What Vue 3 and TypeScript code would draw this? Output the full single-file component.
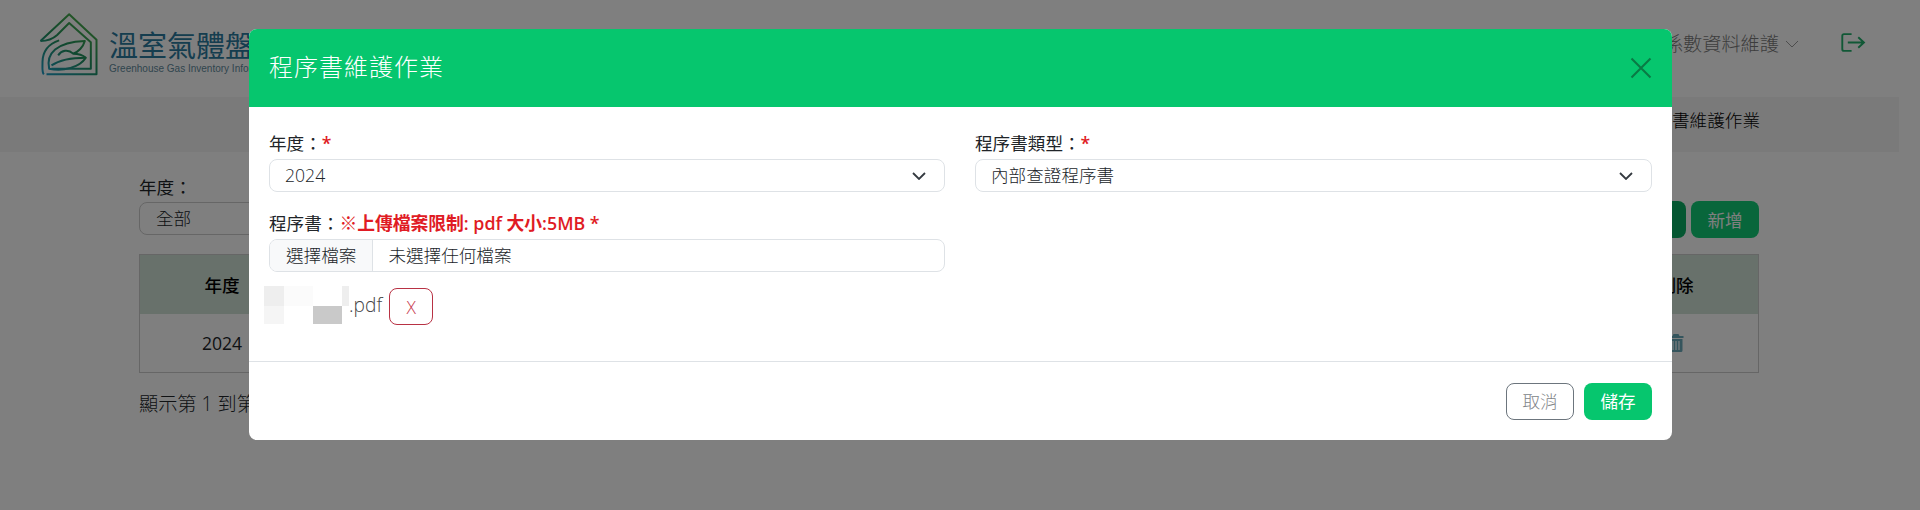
<script setup lang="ts">
const mosaic: string[] = ['#eeeeee', '#fbfbfb', '#ffffff', '#eeeeee', '#f5f5f5', '#ffffff', '#c9c9c9', '#ffffff']
</script>

<template>
  <div class="page" lang="zh-Hant">
    <header class="top">
      <div class="brand">
        <svg class="logo" viewBox="55 35 185 195" width="62" height="65" fill="none">
          <defs>
            <linearGradient id="lg" gradientUnits="userSpaceOnUse" x1="60" y1="225" x2="190" y2="40">
              <stop offset="0" stop-color="#1f9fd0" />
              <stop offset="0.5" stop-color="#209060" />
              <stop offset="1" stop-color="#50b048" />
            </linearGradient>
          </defs>
          <g stroke="url(#lg)" stroke-width="6" stroke-linejoin="round">
            <path d="M62 122 L148 42 L230 118 V222 H80" />
            <path d="M62 122 C85 122 100 115 112 104 L148 68 L213 126 V205 H95" />
            <path d="M72 222 C66 215 68 205 68 185 C68 155 85 130 118 120" />
            <path d="M88 205 C78 160 110 125 195 122 C190 140 175 155 160 160 C175 160 190 165 198 172 C180 200 130 215 88 205 Z" />
            <path d="M95 195 C120 178 160 172 198 172 M115 165 C125 150 145 145 160 160" />
          </g>
        </svg>
        <div class="brand-text">
          <div class="brand-name">溫室氣體盤查資訊系統</div>
          <div class="brand-sub">Greenhouse Gas Inventory Information System</div>
        </div>
      </div>
      <nav class="nav">
        <span class="nav-item">係數資料維護</span>
        <svg class="nav-caret" viewBox="0 0 14 8" width="14" height="8" fill="none">
          <path d="M1 1 L7 7 L13 1" stroke="#9a9a9a" stroke-width="1" />
        </svg>
        <svg class="logout" viewBox="0 0 26 20" width="25" height="19" fill="none">
          <path d="M11 1.2 H3 Q1.2 1.2 1.2 3 V17 Q1.2 18.8 3 18.8 H11" stroke="#22b06c" stroke-width="2" />
          <path d="M7 10 H24 M18 4.5 L24 10 L18 15.5" stroke="#22b06c" stroke-width="2" />
        </svg>
      </nav>
    </header>

    <div class="crumb"><span>程序書維護作業</span></div>

    <main class="content">
      <div class="filters">
        <div class="filter">
          <label class="filter-label">年度：</label>
          <div class="filter-select">全部</div>
        </div>
        <div class="actions">
          <button class="act act-dark">查詢</button>
          <button class="act">新增</button>
        </div>
      </div>

      <table class="list">
        <thead>
          <tr>
            <th class="col-year">年度</th>
            <th>程序書類型</th>
            <th class="col-del">刪除</th>
          </tr>
        </thead>
        <tbody>
          <tr>
            <td>2024</td>
            <td>內部查證程序書</td>
            <td>
              <svg class="trash" viewBox="0 0 16 18" width="16" height="18">
                <path fill="#6aaabb" d="M5.5 0 H10.5 L11.5 2 H15.5 V4 H.5 V2 H4.5 Z M1.5 5 H14.5 V16.5 Q14.5 18 13 18 H3 Q1.5 18 1.5 16.5 Z" />
                <path stroke="#ffffff" stroke-width="1.2" d="M5 7 V16 M8 7 V16 M11 7 V16" />
              </svg>
            </td>
          </tr>
        </tbody>
      </table>
      <p class="pager">顯示第 1 到第 1 項，共 1 項</p>
    </main>

    <div class="backdrop">
      <section class="modal">
        <div class="modal-head">
          <h2 class="modal-title">程序書維護作業</h2>
          <svg class="close" viewBox="0 0 22 22" width="22" height="22" fill="none">
            <path d="M1.5 1.5 L20.5 20.5 M20.5 1.5 L1.5 20.5" stroke="#0a7a45" stroke-width="2" />
          </svg>
        </div>

        <div class="modal-body">
          <div class="grid">
            <div class="field">
              <label>年度：<span class="req">*</span></label>
              <div class="select">
                <span>2024</span>
                <svg viewBox="0 0 14 8" width="14" height="8" fill="none"><path d="M1 1 L7 7 L13 1" stroke="#343a40" stroke-width="1.8" /></svg>
              </div>
            </div>
            <div class="field">
              <label>程序書類型：<span class="req">*</span></label>
              <div class="select">
                <span>內部查證程序書</span>
                <svg viewBox="0 0 14 8" width="14" height="8" fill="none"><path d="M1 1 L7 7 L13 1" stroke="#343a40" stroke-width="1.8" /></svg>
              </div>
            </div>
            <div class="field">
              <label>程序書：<span class="limit">※上傳檔案限制: pdf 大小:5MB *</span></label>
              <div class="file">
                <span class="file-btn">選擇檔案</span>
                <span class="file-name">未選擇任何檔案</span>
              </div>
            </div>
          </div>
          <div class="attached">
            <div class="mosaic">
              <i v-for="(c, i) in mosaic" :key="i" :style="{ background: c }"></i>
            </div>
            <span class="ext">.pdf</span>
            <button class="remove">X</button>
          </div>
        </div>

        <div class="modal-foot">
          <button class="btn-cancel">取消</button>
          <button class="btn-save">儲存</button>
        </div>
      </section>
    </div>
  </div>
</template>

<style>
html, body { margin: 0; height: 510px; overflow: hidden; background: #fff; }
</style>

<style scoped>
.page {
  position: relative;
  width: 1920px;
  height: 510px;
  overflow: hidden;
  background: #fff;
  color: #212529;
  font-family: "Open Sans", "Noto Sans CJK TC", sans-serif;
  font-size: 17.6px;
  line-height: 24px;
}
.top {
  height: 97px;
  display: flex;
  align-items: flex-start;
  justify-content: space-between;
  box-sizing: border-box;
  padding: 12px 54px 0 38px;
}
.brand { display: flex; gap: 9px; }
.logo { flex: none; filter: blur(0.4px); }
.brand-text { padding-top: 17px; }
.brand-name {
  font-size: 29px;
  line-height: 34px;
  color: #2a7a9e;
  font-weight: 400;
  white-space: nowrap;
}
.brand-sub {
  font-family: "Liberation Sans", sans-serif;
  font-size: 10px;
  line-height: 12px;
  color: #5f8a9c;
  white-space: nowrap;
}
.nav { display: flex; align-items: center; height: 60px; color: #808080; }
.nav-item { font-size: 19.2px; color: #7a7a7a; padding-top: 4px; font-weight: 300; }
.nav-caret { margin: 4px 0 0 6px; }
.logout { margin-left: 42px; }
.crumb {
  height: 55px;
  width: 1899px;
  box-sizing: border-box;
  background: #f4f4f4;
  display: flex;
  align-items: center;
  justify-content: flex-end;
  padding: 0 139px 9px 0;
  color: #000;
  font-weight: 300;
}
.content { padding: 22px 161px 0 139px; }
.filters { display: flex; justify-content: space-between; align-items: flex-start; height: 64px; }
.filter-label { display: block; line-height: 26px; height: 26px; margin-bottom: 2px; }
.filter-select {
  width: 320px;
  height: 33px;
  box-sizing: border-box;
  border: 1px solid #ccc;
  border-radius: 8px;
  padding-left: 16px;
  line-height: 30px;
  font-weight: 300;
}
.actions { display: flex; gap: 5px; align-self: flex-end; }
.act {
  width: 68px;
  height: 37px;
  border: 0;
  border-radius: 8px;
  background: #10cc76;
  color: #ffffff;
  font: inherit;
  padding: 0;
}
.act-dark { background: #0aae64; }
.list {
  width: 1620px;
  margin-top: 16px;
  border-collapse: collapse;
  text-align: center;
  border: 1px solid #ccc;
}
.list th {
  height: 59px;
  padding: 0;
  background: #d0e2d6;
  font-weight: 500;
  color: #000;
}
.list td { height: 58px; padding: 0; color: #212529; }
.col-year { width: 164px; }
.col-del { width: 164px; }
.trash { display: block; margin: 0 auto; }
.pager { margin: 19px 0 0; font-size: 19.2px; line-height: 24px; font-weight: 300; }

.backdrop {
  position: absolute;
  inset: 0;
  background: rgba(0, 0, 0, 0.5);
}
.modal {
  position: absolute;
  left: 249px;
  top: 29px;
  width: 1423px;
  height: 411px;
  display: flex;
  flex-direction: column;
  background: #fff;
  border-radius: 8px;
  overflow: hidden;
}
.modal-head {
  height: 78px;
  flex: none;
  background: #06c66e;
  display: flex;
  align-items: center;
  justify-content: space-between;
  padding: 0 20px;
  box-sizing: border-box;
}
.modal-title {
  margin: 0 0 2px;
  font-size: 24px;
  line-height: 32px;
  font-weight: 300;
  color: #fff;
  letter-spacing: 1px;
}
.modal-body { flex: 1; padding: 24px 20px 0; }
.grid {
  display: grid;
  grid-template-columns: 676px 677px;
  column-gap: 30px;
  row-gap: 19px;
}
.field label { display: block; line-height: 24px; height: 24px; margin-bottom: 4px; white-space: nowrap; }
.req { color: #e01b24; font-weight: 600; }
.limit { color: #e01b24; font-weight: 600; font-size: 17.8px; }
.select {
  height: 33px;
  box-sizing: border-box;
  border: 1px solid #dee2e6;
  border-radius: 8px;
  padding: 0 18px 0 15px;
  display: flex;
  align-items: center;
  justify-content: space-between;
  font-weight: 300;
}
.select span { margin-top: -2px; }
.file {
  height: 33px;
  box-sizing: border-box;
  border: 1px solid #dee2e6;
  border-radius: 8px;
  display: flex;
  overflow: hidden;
  font-weight: 300;
}
.file-btn {
  background: #f8f9fa;
  border-right: 1px solid #dee2e6;
  padding: 0 16px;
  line-height: 30px;
}
.file-name { padding: 0 15px; line-height: 30px; }
.attached {
  display: flex;
  align-items: flex-start;
  margin: 14px 0 0 -5px;
}
.mosaic {
  display: grid;
  grid-template-columns: 20px 29px 29px 7px;
  grid-template-rows: 20px 18px;
}
.ext { font-size: 19.2px; line-height: 38px; margin-right: 7px; color: #444; font-weight: 300; }
.remove {
  width: 44px;
  height: 37px;
  margin-top: 2px;
  border: 1px solid #b83244;
  border-radius: 8px;
  background: #fff;
  color: #c8404f;
  font: inherit;
  font-weight: 300;
  padding: 0;
}
.modal-foot {
  height: 79px;
  flex: none;
  box-sizing: border-box;
  border-top: 1px solid #dee2e6;
  display: flex;
  justify-content: flex-end;
  align-items: center;
  gap: 10px;
  padding: 0 20px;
}
.modal-foot button {
  width: 68px;
  height: 37px;
  border-radius: 8px;
  font: inherit;
  padding: 0;
}
.btn-cancel { background: #fff; border: 1px solid #6c757d; color: #808488; font-weight: 300 !important; }
.btn-save { background: #06c66e; border: 0; color: #fff; font-weight: 400 !important; }
</style>
